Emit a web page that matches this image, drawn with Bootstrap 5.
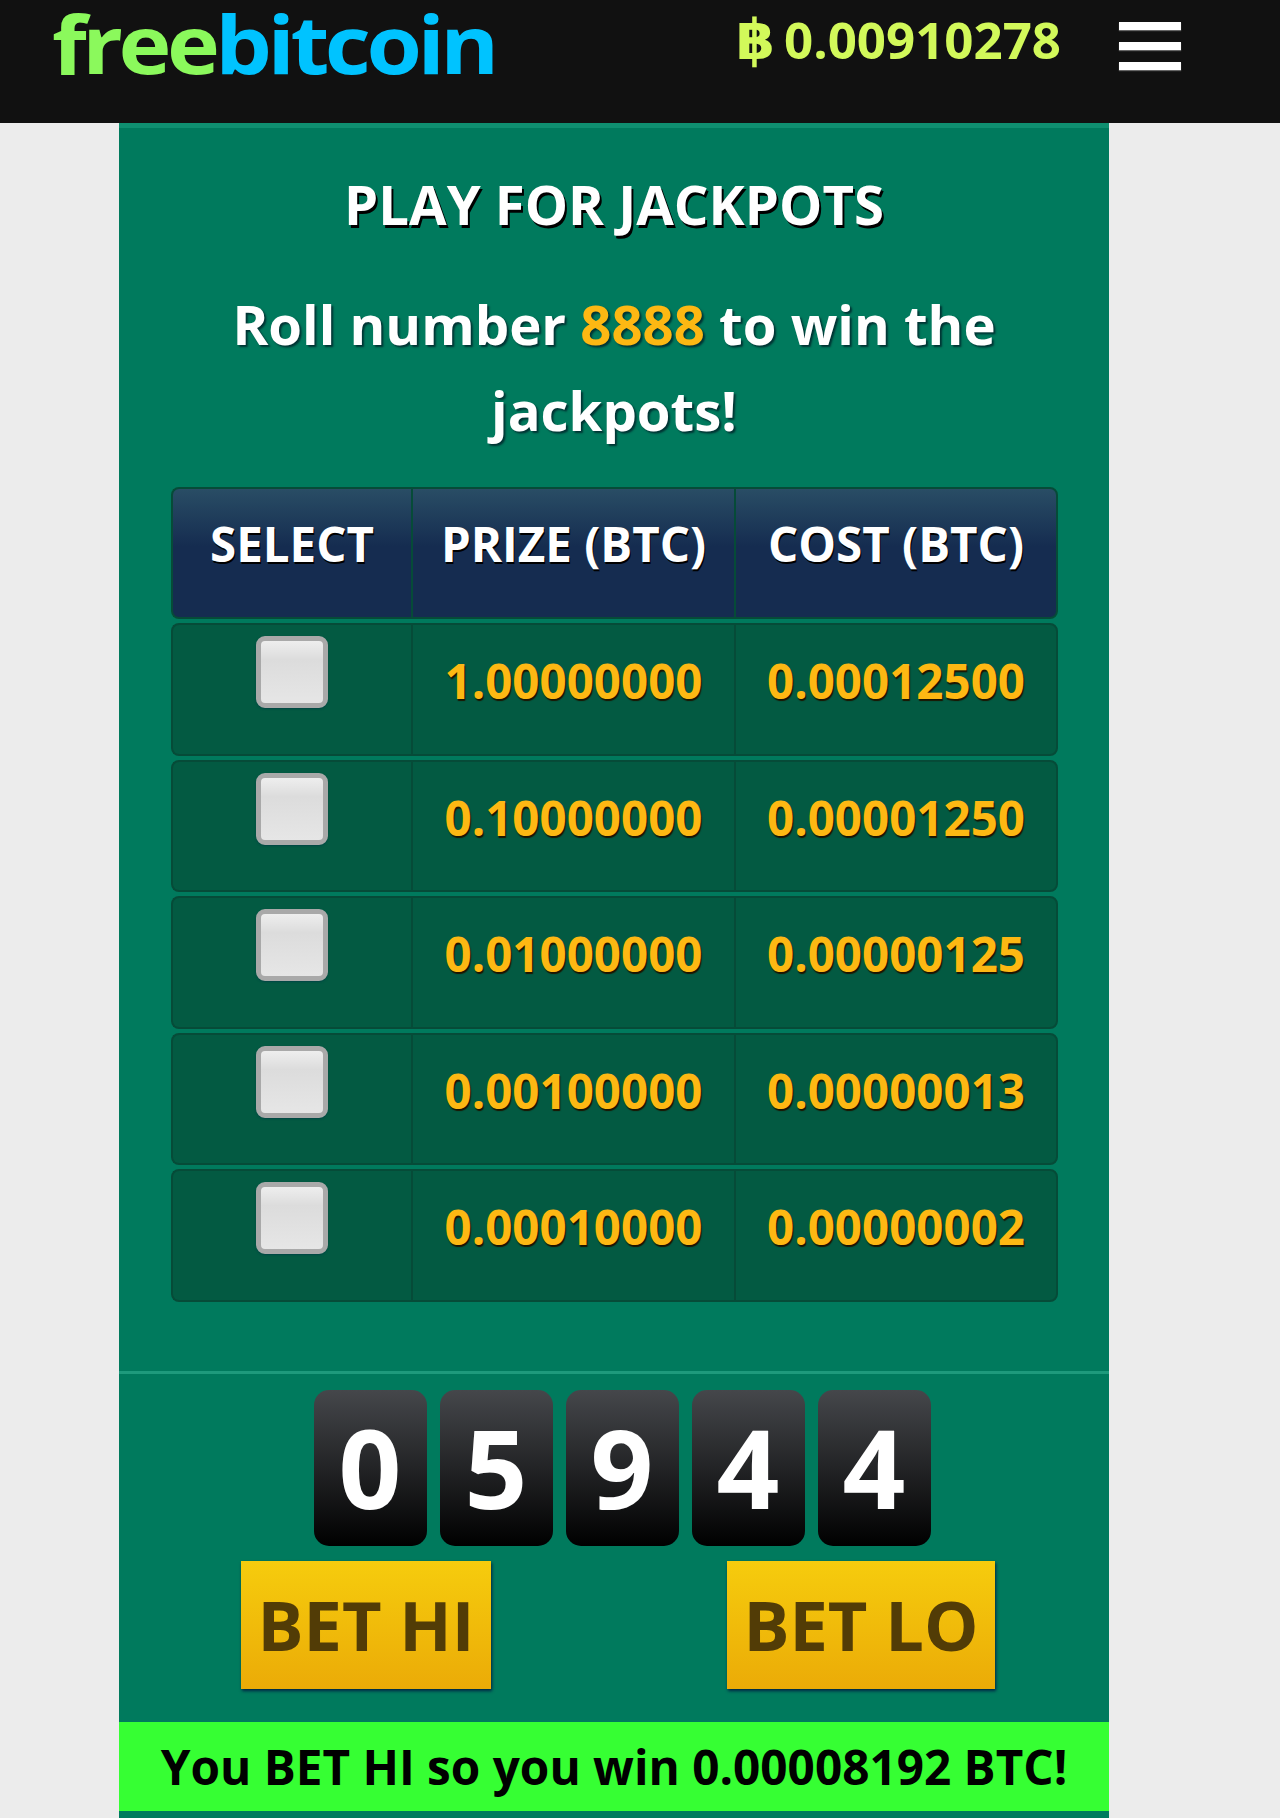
<!DOCTYPE html>
<html lang="en">

<head>
    <meta charset="UTF-8">
    <meta name="viewport" content="width=device-width, initial-scale=1.0">
    <title>freebitcoin</title>
    <link rel="stylesheet" href="https://cdn.jsdelivr.net/npm/bootstrap@5.3.0/dist/css/bootstrap.min.css">
    <style>
        body { background: #ececec; font-family: "Open Sans", "Liberation Sans", sans-serif; height: 1818px; overflow: hidden; }
        .top-bar { background: #111; height: 123px; padding: 0 99px 0 52px; }
        .logo { font-weight: 700; font-size: 80px; line-height: 86px; letter-spacing: -4px; color: #8bf95c; white-space: nowrap; transform: scaleX(1.12); transform-origin: left; }
        .logo span { color: #00c3ff; }
        .balance { font-weight: 700; font-size: 51px; line-height: 78px; color: #d2f95a; margin-left: auto; margin-right: 58px; }
        .balance-sign { font-family: "DejaVu Sans", sans-serif; font-weight: 700; font-size: 56px; line-height: 0; margin-right: 9px; }
        .burger { width: 62px; padding-top: 22px; }
        .burger i { display: block; height: 8px; background: #fff; margin-bottom: 12px; box-shadow: 0 1px 1px #666; }
        .panel { width: 990px; height: 1695px; margin-left: 119px; background: #007a5d; border-top: 5px solid #0f8f70; }
        .panel-title { color: #fff; font-size: 54.5px; font-weight: 700; line-height: 72px; padding-top: 40px; margin: 0; text-shadow: 2px 3px 0 #000; }
        .panel-sub { color: #fff; font-size: 54.5px; font-weight: 700; line-height: 86px; padding: 41px 100px 0; margin: 0 0 30px; text-shadow: 2px 2px 2px #033; }
        .panel-sub b { color: #fdb813; font-weight: 700; }
        .jack-table { width: 887px; margin: 0 51px 0 52px; border-collapse: separate; border-spacing: 0 4px; table-layout: fixed; }
        .jack-table th, .jack-table td { text-align: center; vertical-align: top; border: solid #064b38; border-width: 2px 0 2px 2px; }
        .jack-table th { height: 132px; padding-top: 23px; color: #fff; font-size: 47.5px; font-weight: 700; line-height: 64px; background: linear-gradient(#294d65, #152c50 45%); text-shadow: 1px 2px 0 #000; }
        .jack-table td { height: 132.5px; padding-top: 24px; color: #fdb813; font-size: 47.5px; font-weight: 700; line-height: 64px; background: #035a42; text-shadow: 1px 2px 1px #1c1400; }
        .jack-table th:first-child, .jack-table td:first-child { border-radius: 8px 0 0 8px; }
        .jack-table th:last-child, .jack-table td:last-child { border-right-width: 2px; border-radius: 0 8px 8px 0; }
        .jack-table td:first-child { padding-top: 11px; }
        .check-box { display: block; width: 72px; height: 72px; margin: 0 auto; background: linear-gradient(#eee, #dcdcdc 30%, #e6e6e6); border: 5px solid #a9a9a9; border-radius: 9px; box-shadow: 0 1px 2px #044; }
        .panel-rule { height: 3px; background: #1e9a7c; margin-top: 65px; }
        .digit-row { gap: 13px; padding: 16px 0 0 16px; }
        .digit { width: 113px; height: 156px; border-radius: 15px; background: linear-gradient(#45474b, #000); color: #fff; font-size: 110px; font-weight: 700; line-height: 152px; text-align: center; }
        .bet-row { padding: 15px 114px 0 122px; }
        .bet-btn { height: 128px; padding: 0; border: 0; border-radius: 0; background: linear-gradient(#f6cc0d, #ebab07); color: #523c06; font-size: 68.5px; font-weight: 700; line-height: 128px; box-shadow: 1px 2px 3px #024; }
        .bet-hi { width: 250px; }
        .bet-lo { width: 268px; }
        .win-bar { height: 89px; margin-top: 33px; background: #36ff33; color: #000; font-size: 47.7px; font-weight: 700; line-height: 89px; text-align: center; white-space: nowrap; }
    </style>
</head>

<body>
    <header class="top-bar d-flex align-items-start">
        <div class="logo">free<span>bitcoin</span></div>
        <div class="balance"><span class="balance-sign">฿</span>0.00910278</div>
        <div class="burger"><i></i><i></i><i></i></div>
    </header>

    <main class="panel">
        <h1 class="panel-title text-center">PLAY FOR JACKPOTS</h1>
        <p class="panel-sub text-center">Roll number <b>8888</b> to win the jackpots!</p>

        <table class="jack-table">
            <colgroup>
                <col style="width: 240px">
                <col style="width: 323px">
                <col style="width: 324px">
            </colgroup>
            <thead>
                <tr>
                    <th>SELECT</th>
                    <th>PRIZE (BTC)</th>
                    <th>COST (BTC)</th>
                </tr>
            </thead>
            <tbody id="prizeRows"></tbody>
        </table>

        <div class="panel-rule"></div>

        <div class="digit-row d-flex justify-content-center" id="digits"></div>

        <div class="bet-row d-flex justify-content-between">
            <button class="btn bet-btn bet-hi">BET HI</button>
            <button class="btn bet-btn bet-lo">BET LO</button>
        </div>

        <div class="win-bar">You BET HI so you win 0.00008192 BTC!</div>
    </main>

    <script src="https://cdn.jsdelivr.net/npm/bootstrap@5.3.0/dist/js/bootstrap.bundle.min.js"></script>
    <script>
        const prizes = [
            ["1.00000000", "0.00012500"],
            ["0.10000000", "0.00001250"],
            ["0.01000000", "0.00000125"],
            ["0.00100000", "0.00000013"],
            ["0.00010000", "0.00000002"],
        ];
        document.getElementById("prizeRows").innerHTML = prizes.map((p) =>
            `<tr><td><span class="check-box"></span></td><td>${p[0]}</td><td>${p[1]}</td></tr>`
        ).join("");

        document.getElementById("digits").innerHTML = "05944".split("").map((d) =>
            `<div class="digit">${d}</div>`
        ).join("");
    </script>
</body>

</html>
